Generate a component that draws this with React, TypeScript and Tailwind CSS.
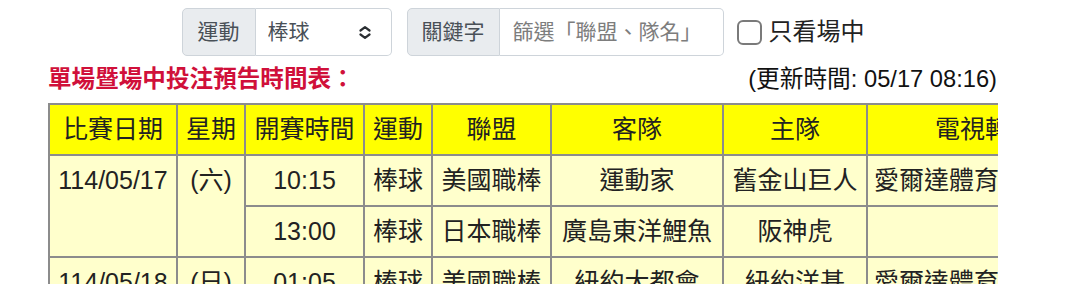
import React, { useState } from 'react';

const FONT = "font-['Liberation_Sans','Noto_Sans_CJK_TC',sans-serif]";

const rows = [
  { date: '114/05/17', day: '(六)', span: 2, time: '10:15', sport: '棒球', league: '美國職棒', away: '運動家', home: '舊金山巨人', tv: '愛爾達體育1台、2台' },
  { date: '', day: '', span: 0, time: '13:00', sport: '棒球', league: '日本職棒', away: '廣島東洋鯉魚', home: '阪神虎', tv: '' },
  { date: '114/05/18', day: '(日)', span: 1, time: '01:05', sport: '棒球', league: '美國職棒', away: '紐約大都會', home: '紐約洋基', tv: '愛爾達體育1台、2台' },
];

const heads = [
  { label: '比賽日期', w: 'w-[128px]' },
  { label: '星期', w: 'w-[68px]' },
  { label: '開賽時間', w: 'w-[119px]' },
  { label: '運動', w: 'w-[68px]' },
  { label: '聯盟', w: 'w-[119px]' },
  { label: '客隊', w: 'w-[172px]' },
  { label: '主隊', w: 'w-[144px]' },
  { label: '電視轉播', w: 'w-[236px]' },
];

const cell = 'border-r-2 border-b-2 border-[#8c8c8c] px-[6px] text-center whitespace-nowrap';

const App = () => {
  const [sport, setSport] = useState('棒球');
  const [keyword, setKeyword] = useState('');
  const [liveOnly, setLiveOnly] = useState(false);

  return (
    <div className={`w-[1080px] h-[284px] overflow-hidden bg-white text-[#222] ${FONT}`}>
      <div className="ml-[48px] w-[950px] overflow-hidden">
        {/* filters */}
        <div className="flex justify-center items-center pt-[8px] h-[56px]">
          <div className="flex h-[48px] w-[210px] text-[21px]">
            <span className="flex items-center px-[15px] bg-[#e9ecef] border border-[#ced4da] rounded-l-[5px] text-[#495057]">
              運動
            </span>
            <div className="relative flex-1">
              <select
                className={`appearance-none w-full h-full pl-[12px] pr-[30px] bg-white border border-l-0 border-[#ced4da] rounded-r-[5px] text-[#495057] outline-none ${FONT}`}
                value={sport}
                onChange={(e) => setSport(e.target.value)}
              >
                <option>棒球</option>
                <option>籃球</option>
                <option>足球</option>
              </select>
              <svg className="absolute right-[21px] top-[18px] pointer-events-none" width="12" height="13" viewBox="0 0 12 13" fill="none" stroke="#2b2f33" strokeWidth="2.2" strokeLinecap="round" strokeLinejoin="round">
                <polyline points="1.5,4.5 6,1.2 10.5,4.5" />
                <polyline points="1.5,8.5 6,11.8 10.5,8.5" />
              </svg>
            </div>
          </div>
          <div className="flex h-[48px] w-[317px] ml-[15px] text-[21px]">
            <span className="flex items-center px-[14px] bg-[#e9ecef] border border-[#ced4da] rounded-l-[5px] text-[#495057]">
              關鍵字
            </span>
            <input
              type="text"
              className={`flex-1 min-w-0 px-[13px] bg-white border border-l-0 border-[#ced4da] rounded-r-[5px] text-[#495057] placeholder:text-[#7d7d7d] outline-none ${FONT}`}
              placeholder="篩選「聯盟、隊名」"
              value={keyword}
              onChange={(e) => setKeyword(e.target.value)}
            />
          </div>
          <label className="flex items-center ml-[13px] text-[24px] text-[#222]">
            <input
              type="checkbox"
              className="appearance-none w-[25px] h-[25px] border-2 border-[#7a7a7a] rounded-[6px] bg-white checked:bg-[#0d6efd] checked:border-[#0d6efd]"
              checked={liveOnly}
              onChange={(e) => setLiveOnly(e.target.checked)}
            />
            <span className="ml-[7px]">只看場中</span>
          </label>
        </div>

        {/* title */}
        <div className="flex justify-between items-center mt-[6px] h-[36px]">
          <h2 className="text-[23.6px] font-bold text-[#d0103a]">單場暨場中投注預告時間表：</h2>
          <span className="text-[23.7px] text-[#111] pr-[1px]">(更新時間: 05/17 08:16)</span>
        </div>

        {/* schedule */}
        <table className="mt-[5px] w-[1056px] table-fixed border-separate border-spacing-0 border-t-2 border-l-2 border-[#8c8c8c] text-[25px] leading-[37px]">
          <thead>
            <tr>
              {heads.map((h) => (
                <th key={h.label} className={`${cell} ${h.w} h-[51px] bg-[#ffff00] font-normal`}>
                  {h.label}
                </th>
              ))}
            </tr>
          </thead>
          <tbody>
            {rows.map((r, i) => (
              <tr key={i}>
                {r.span > 0 && (
                  <>
                    <td rowSpan={r.span} className={`${cell} align-top pt-[6px] bg-[#ffffcc]`}>{r.date}</td>
                    <td rowSpan={r.span} className={`${cell} align-top pt-[6px] bg-[#ffffcc]`}>{r.day}</td>
                  </>
                )}
                <td className={`${cell} h-[51px] bg-[#ffffcc]`}>{r.time}</td>
                <td className={`${cell} bg-[#ffffcc]`}>{r.sport}</td>
                <td className={`${cell} bg-[#ffffcc]`}>{r.league}</td>
                <td className={`${cell} bg-[#ffffcc]`}>{r.away}</td>
                <td className={`${cell} bg-[#ffffcc]`}>{r.home}</td>
                <td className={`${cell} bg-[#ffffcc]`}>{r.tv}</td>
              </tr>
            ))}
          </tbody>
        </table>
      </div>
    </div>
  );
};

export default App;
